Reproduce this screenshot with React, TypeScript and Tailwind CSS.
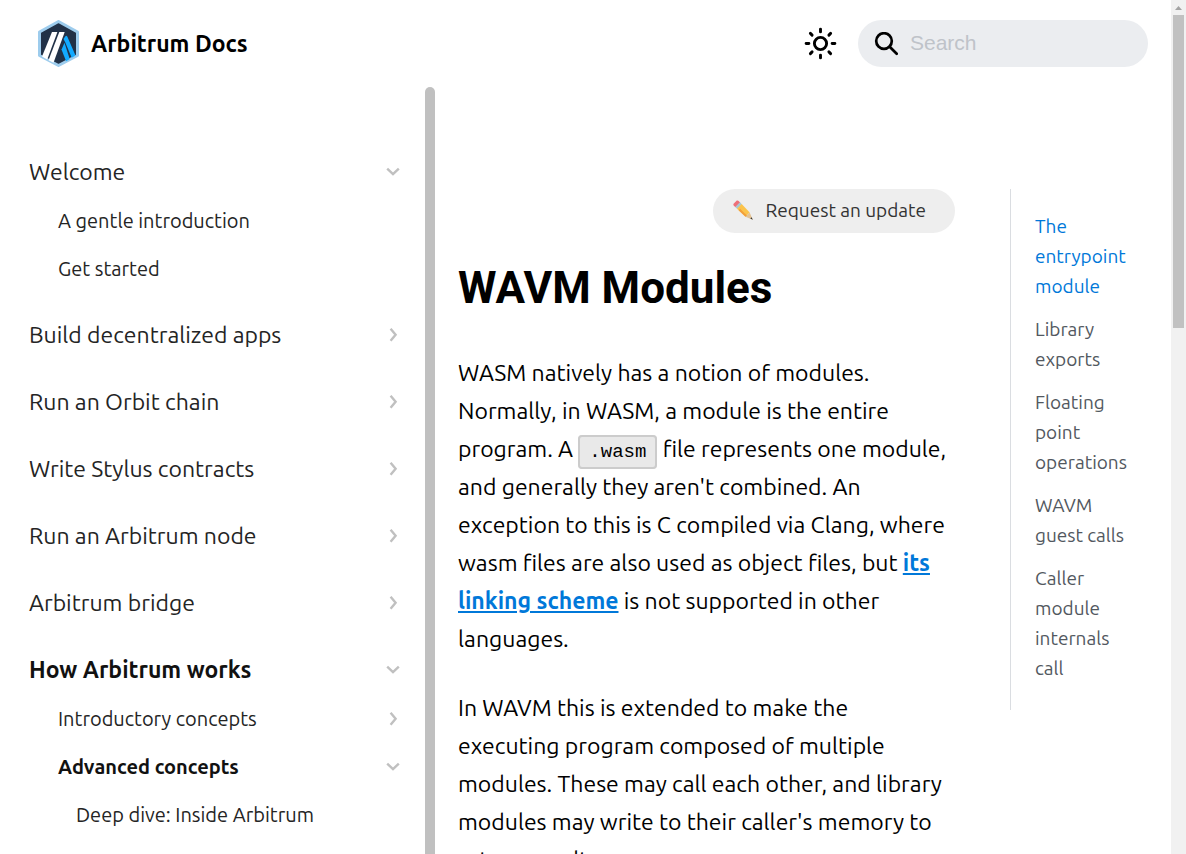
import React from "react";

type NavItem = { label: string; open?: boolean; leaf?: boolean; active?: boolean; children?: NavItem[] };

const nav: NavItem[] = [
  {
    label: "Welcome",
    open: true,
    children: [
      { label: "A gentle introduction", leaf: true },
      { label: "Get started", leaf: true },
    ],
  },
  { label: "Build decentralized apps" },
  { label: "Run an Orbit chain" },
  { label: "Write Stylus contracts" },
  { label: "Run an Arbitrum node" },
  { label: "Arbitrum bridge" },
  {
    label: "How Arbitrum works",
    open: true,
    active: true,
    children: [
      { label: "Introductory concepts" },
      {
        label: "Advanced concepts",
        open: true,
        active: true,
        children: [{ label: "Deep dive: Inside Arbitrum", leaf: true }],
      },
    ],
  },
];

const toc = [
  "The entrypoint module",
  "Library exports",
  "Floating point operations",
  "WAVM guest calls",
  "Caller module internals call",
];

function Chevron({ open }: { open?: boolean }) {
  return (
    <svg viewBox="0 0 14 14" className="size-3.5 shrink-0" fill="none" stroke="#c0c0c0" strokeWidth="2.4" aria-hidden="true">
      <path d={open ? "M1.2 3.6l5.8 5.6 5.8-5.6" : "M4.6 .8l5 6-5 6"} />
    </svg>
  );
}

function NavList({ items, level }: { items: NavItem[]; level: number }) {
  const pad = ["pl-[29px]", "pl-[58px]", "pl-[76px]"][level];
  const size = level === 0 ? "h-[50px] text-[23px]" : "h-12 text-[20px]";
  return (
    <ul className={level === 0 ? "flex flex-col gap-[17px]" : "flex flex-col"}>
      {items.map((item) => {
        const row = `flex w-full items-center justify-between pr-[25px] text-left whitespace-nowrap ${pad} ${size} ${
          item.active ? "font-bold text-[#111]" : "text-[#242424]"
        }`;
        return (
          <li key={item.label}>
            {item.leaf ? (
              <a href="#" className={row}>{item.label}</a>
            ) : (
              <button type="button" className={row} aria-expanded={!!item.open}>
                {item.label}
                <Chevron open={item.open} />
              </button>
            )}
            {item.children && <NavList items={item.children} level={level + 1} />}
          </li>
        );
      })}
    </ul>
  );
}

function Logo() {
  return (
    <svg viewBox="0 0 42 48" className="h-12 w-[42px]" aria-hidden="true">
      <path d="M20.5 1.5L39.5 12v23.5L20.5 45.5 1.5 35.5V12z" fill="#213147" stroke="#9dcced" strokeWidth="3" strokeLinejoin="round" />
      <path d="M25.5 19l1.7-2.6q1.2-1.6 2.2.4L37.5 35.4l-3.8 2.4-6.5-15.6z" fill="#12aaff" />
      <path d="M23.5 29.5l3-6.7 5.2 16.3-3.6 2.2z" fill="#12aaff" />
      <path d="M14 12h5.4L9.2 39.4 4 36.5z" fill="#fff" />
      <path d="M21.3 12h5.4L15.5 42.8 10.5 40.2z" fill="#fff" />
    </svg>
  );
}

export default function App() {
  return (
    <div className="flex h-screen overflow-hidden bg-white font-['Ubuntu','Noto_Sans',sans-serif] text-black">
      <div className="flex min-w-0 flex-1 flex-col">
        <header className="flex h-[87px] shrink-0 items-center justify-between pr-[23px] pl-[38px]">
          <a href="#" className="flex items-center gap-[11px] text-[23px] leading-9 font-bold whitespace-nowrap">
            <Logo />
            Arbitrum Docs
          </a>
          <div className="flex items-center gap-[21px]">
            <button type="button" aria-label="Switch theme">
              <svg viewBox="0 0 34 34" className="size-[34px]" fill="none" stroke="#000" strokeWidth="2.9" strokeLinecap="round">
                <circle cx="17.5" cy="16.5" r="6.1" />
                <path d="M17.5 2.1v2.8M17.5 28.1v2.8M3.1 16.5h2.8M29.1 16.5h2.8M7.4 6.4l1.7 1.7M25.9 24.9l1.7 1.7M7.4 26.6l1.7-1.7M25.9 8.1l1.7-1.7" />
              </svg>
            </button>
            <label className="flex h-[47px] w-[290px] items-center gap-3 rounded-full bg-[#ebedf0] pr-5 pl-4">
              <svg viewBox="0 0 24 24" className="size-6 shrink-0" fill="none" stroke="#000" strokeWidth="2.7" strokeLinecap="round" aria-hidden="true">
                <circle cx="10" cy="9" r="7.8" />
                <path d="M15.7 14.7l7 7" />
              </svg>
              <input
                type="search"
                aria-label="Search"
                placeholder="Search"
                className="h-[30px] w-full min-w-0 bg-transparent pb-0.5 font-['Liberation_Sans',sans-serif] text-[21px] outline-none placeholder:text-[#bfc3c9]"
              />
            </label>
          </div>
        </header>

        <div className="flex min-h-0 flex-1">
          <aside className="flex w-[435px] shrink-0">
            <nav aria-label="Docs" className="min-w-0 flex-1 overflow-hidden pt-[60px]">
              <NavList items={nav} level={0} />
            </nav>
            <div className="w-2.5 rounded-t-full bg-[#c0c0c0]" />
          </aside>

          <main className="min-w-0 flex-1 overflow-hidden pt-[102px] pr-6 pl-[23px]">
            <div className="flex justify-end">
              <button type="button" className="flex h-11 items-center gap-3 rounded-full bg-[#eee] pr-[29px] pb-0.5 pl-5 text-[19px] whitespace-nowrap text-[#333]">
                <svg viewBox="0 0 20 20" className="size-5" aria-hidden="true">
                  <path d="M.6 3.8L3.8.6Q5 0 6.1 1.4L7.2 2.5 2.5 7.2 1.1 5.9Q-.1 4.8.6 3.8z" fill="#ee7078" />
                  <path d="M2.3 7L7 2.3l1.9 1.9L4.2 8.9z" fill="#a9c7d3" />
                  <path d="M4 8.7L8.7 4l8 8.5-4.2 4.2z" fill="#fbc34a" />
                  <path d="M5.6 10.2l1.5-1.5 7.6 7.5-2.2.5z" fill="#f29f3a" />
                  <path d="M12.5 16.7l4.2-4.2 3 7.2z" fill="#e3c293" />
                  <path d="M17.3 18.6l1.3-1.3 1.2 2.5z" fill="#333" />
                </svg>
                Request an update
              </button>
            </div>
            <h1 className="mt-[25px] mb-9 font-['Roboto',sans-serif] text-[44px] leading-[60px] font-bold">WAVM Modules</h1>
            <div className="flex flex-col gap-[31px] pr-1.5 text-[23px] leading-[38px]">
              <p>
                WASM natively has a notion of modules. Normally, in WASM, a module is the entire program. A{" "}
                <code className="rounded border-2 border-[#ccc] bg-[#e9e9e9] px-[9px] py-1 font-['Liberation_Mono',monospace] text-[19px] leading-none">.wasm</code>{" "}
                file represents one module, and generally they aren't combined. An exception to this is C compiled via Clang, where wasm files are also used as object files, but{" "}
                <a href="#" className="font-bold text-[#0078d9] underline decoration-2 underline-offset-2">its linking scheme</a> is not supported in other languages.
              </p>
              <p>
                In WAVM this is extended to make the executing program composed of multiple modules. These may call each other, and library modules may write to their caller's memory to return results.
              </p>
            </div>
          </main>

          <nav aria-label="On this page" className="mt-[102px] mr-8 ml-[31px] w-[129px] shrink-0 self-start border-l border-[#dadde1] pt-[22px] pr-2 pb-[27px] pl-6">
            <ul className="flex flex-col gap-[13px] text-[19px] leading-[30px]">
              {toc.map((label, i) => (
                <li key={label}>
                  <a href="#" className={i === 0 ? "block text-[#0078d9]" : "block text-[#525860]"}>{label}</a>
                </li>
              ))}
            </ul>
          </nav>
        </div>
      </div>

      <div className="flex w-[15px] shrink-0 flex-col items-center bg-[#f1f1f1]" aria-hidden="true">
        <svg viewBox="0 0 15 15" className="size-[15px]"><path d="M4 10l3.5-4 3.5 4z" fill="#a3a3a3" /></svg>
        <div className="h-[313px] w-[11px] bg-[#c1c1c1]" />
      </div>
    </div>
  );
}
